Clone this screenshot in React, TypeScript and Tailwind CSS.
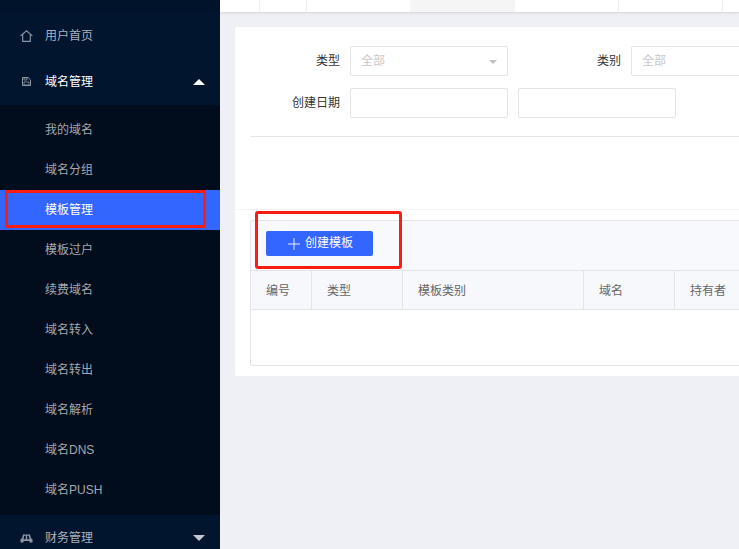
const subMenu = ["我的域名", "域名分组", "模板管理", "模板过户", "续费域名", "域名转入", "域名转出", "域名解析", "域名DNS", "域名PUSH"];

const columns = [
  { label: "编号", width: "w-[61px]" },
  { label: "类型", width: "w-[91px]" },
  { label: "模板类别", width: "w-[181px]" },
  { label: "域名", width: "w-[91px]" },
  { label: "持有者", width: "w-[91px]" },
];

function Caret({ up }: { up?: boolean }) {
  return (
    <svg className="ml-auto mr-[15px] h-[6px] w-[12px]" viewBox="0 0 12 6" aria-hidden="true">
      <path d={up ? "M6 0L12 6H0z" : "M0 0h12L6 6z"} fill={up ? "#ffffff" : "#c3c9d1"} />
    </svg>
  );
}

function HomeIcon() {
  return (
    <svg className="h-[12px] w-[13px]" viewBox="0 0 13 12" fill="none" stroke="#8d97a5" strokeWidth="1.1" aria-hidden="true">
      <path d="M.6 5.8L6.5.8l5.9 5M2.7 4.4v7h7.6v-7" />
    </svg>
  );
}

// floppy-style page icon
function DocIcon() {
  return (
    <svg className="h-[9px] w-[9px]" viewBox="0 0 9 9" aria-hidden="true">
      <path d="M.5.5h5.6l2.4 2.4v5.6H.5z" fill="none" stroke="#8d97a5" />
      <path d="M2 1h3v2H2zM2 5h5v3H2z" fill="none" stroke="#8d97a5" strokeWidth="0.8" />
    </svg>
  );
}

function CarIcon() {
  return (
    <svg className="h-[9px] w-[13px]" viewBox="0 0 13 9" aria-hidden="true">
      <path d="M3 .6h7l1 3.6 1.5 1V8.5h-3V7h-6v1.5H.5V5.2l1.5-1z" fill="#8d97a5" />
      <path d="M4.2 1.8h1.6v3.4H3.5zM7.2 1.8h1.6l.7 3.4H7.2z" fill="#01152e" />
    </svg>
  );
}

function Sidebar() {
  return (
    <aside className="relative flex h-full w-[220px] shrink-0 flex-col overflow-hidden bg-[#01152e] text-[12px]">
      <div className="h-[12px] shrink-0 bg-[#01132a]" />
      <div className="flex h-[46px] shrink-0 items-center pt-[1px] text-[#aab1bb]">
        <span className="flex w-[45px] pl-[20px]"><HomeIcon /></span>
        用户首页
      </div>
      <div className="flex h-[47px] shrink-0 items-center text-white">
        <span className="flex w-[45px] pl-[22px]"><DocIcon /></span>
        域名管理
        <Caret up />
      </div>
      <ul className="shrink-0 bg-[#010d1d] py-[5px]">
        {subMenu.map((item) => (
          <li
            key={item}
            className={`flex h-[40px] items-center pl-[45px] ${item === "模板管理" ? "bg-[#3366ff] text-white" : "text-[#a3a8af]"}`}
          >
            {item}
          </li>
        ))}
      </ul>
      <div className="flex h-[46px] shrink-0 items-center text-[#aab1bb]">
        <span className="flex w-[45px] pl-[20px]"><CarIcon /></span>
        财务管理
        <Caret />
      </div>
      <div className="absolute left-[5px] top-[190px] h-[38px] w-[201px] rounded-[2px] border-[3px] border-[#fb1c12]" />
    </aside>
  );
}

function TopBar() {
  return (
    <div className="flex h-[13px] w-full shrink-0 border-b border-[#dcdee3] bg-white shadow-[0_1px_2px_rgba(0,0,0,0.06)]">
      <div className="h-full w-[40px] border-r border-[#f0f0f0]" />
      <div className="h-full w-[47px] border-r border-[#f0f0f0]" />
      <div className="h-full w-[103px]" />
      <div className="h-full w-[105px] bg-[#f5f5f5]" />
      <div className="h-full w-[104px] border-r border-[#f0f0f0]" />
      <div className="h-full w-[104px] border-r border-[#f0f0f0]" />
    </div>
  );
}

function Field({ className, placeholder, caret }: { className: string; placeholder?: string; caret?: boolean }) {
  return (
    <div className={`flex h-[30px] shrink-0 items-center rounded-[2px] border border-[#e4e4e4] bg-white pl-[10px] text-[12px] text-[#c8c8c8] ${className}`}>
      {placeholder}
      {caret && (
        <svg className="ml-auto mr-[10px] mt-[2px] h-[4px] w-[8px]" viewBox="0 0 8 4" aria-hidden="true">
          <path d="M0 0h8L4 4z" fill="#c2c2c2" />
        </svg>
      )}
    </div>
  );
}

function FilterForm() {
  return (
    <div className="border-b border-[#f3f4f6] px-[15px] pt-[19px]">
      <div className="flex items-center">
        <label className="w-[90px] text-right text-[12px] text-[#333333]">类型</label>
        <Field className="ml-[10px] w-[158px]" placeholder="全部" caret />
        <label className="w-[113px] text-right text-[12px] text-[#333333]">类别</label>
        <Field className="ml-[10px] w-[158px]" placeholder="全部" caret />
      </div>
      <div className="mt-[12px] flex items-center">
        <label className="w-[90px] text-right text-[12px] text-[#333333]">创建日期</label>
        <Field className="ml-[10px] w-[158px]" />
        <Field className="ml-[10px] w-[158px]" />
      </div>
      <div className="mt-[18px] h-[73px] border-t border-[#e6e6e6]" />
    </div>
  );
}

function TablePanel() {
  return (
    <div className="relative mx-[15px] mt-[10px] h-[146px] rounded-[2px] border border-[#e4e5e8] bg-white">
      <div className="flex h-[50px] items-start border-b border-[#e4e5e8] bg-[#f8f9fd] pl-[15px] pt-[10px]">
        <button className="flex h-[25px] w-[107px] items-center justify-center gap-[5px] rounded-[2px] bg-[#3366ff] pb-[2px] pl-[2px] text-[12px] text-white">
          <svg className="mt-[2px] h-[12px] w-[12px]" viewBox="0 0 12 12" aria-hidden="true">
            <path d="M5.5 0h1v5.5H12v1H6.5V12h-1V6.5H0v-1h5.5z" fill="#e6ecff" />
          </svg>
          创建模板
        </button>
      </div>
      <div className="flex h-[39px] border-b border-[#e4e5e8] bg-[#f7f8fc] text-[12px] text-[#666666]">
        {columns.map((col) => (
          <div key={col.label} className={`flex h-full shrink-0 items-center border-r border-[#e4e5e8] pl-[15px] pt-[1px] ${col.width}`}>
            {col.label}
          </div>
        ))}
      </div>
    </div>
  );
}

export default function App() {
  return (
    <div
      className="relative flex h-[549px] w-[739px] overflow-hidden bg-[#eef0f5]"
      style={{ fontFamily: '"Liberation Sans", "Noto Sans CJK SC", sans-serif' }}
    >
      <Sidebar />
      <main className="flex min-w-0 flex-1 flex-col overflow-hidden">
        <TopBar />
        <div className="ml-[15px] mt-[14px] h-[349px] w-[1100px] shrink-0 rounded-[2px] bg-white">
          <FilterForm />
          <TablePanel />
        </div>
      </main>
      <div className="absolute left-[255px] top-[211px] h-[58px] w-[147px] rounded-[3px] border-[3px] border-[#fb1c12]" />
    </div>
  );
}
